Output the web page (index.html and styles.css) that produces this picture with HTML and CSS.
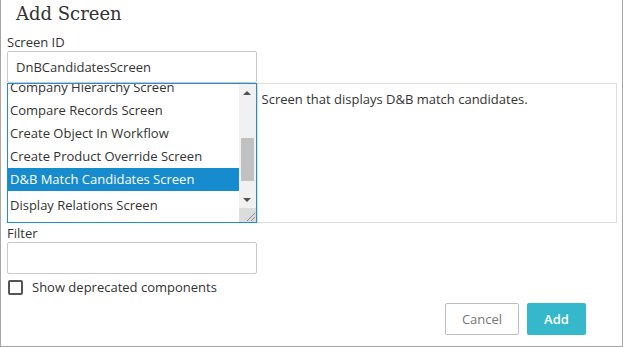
FILE: index.html
```html
<!DOCTYPE html>
<html lang="en">
<head>
  <meta charset="UTF-8">
  <meta name="viewport" content="width=device-width, initial-scale=1.0">
  <link rel="stylesheet" href="styles.css">
  <title>Add Screen</title>
</head>
<body>
  <div class="dialog">
    <h1 class="dialog-title">Add Screen</h1>

    <label class="field-label" for="screenId">Screen ID</label>
    <input type="text" id="screenId" class="text-input" value="DnBCandidatesScreen">

    <div class="picker-row">
      <div class="listbox">
        <div class="listbox-items">
          <div class="list-item first">Company Hierarchy Screen</div>
          <div class="list-item">Compare Records Screen</div>
          <div class="list-item">Create Object In Workflow</div>
          <div class="list-item">Create Product Override Screen</div>
          <div class="list-item selected">D&amp;B Match Candidates Screen</div>
          <div class="list-item after-selected">Display Relations Screen</div>
        </div>
        <div class="scrollbar">
          <div class="scroll-btn"><span class="arrow-up"></span></div>
          <div class="scroll-track"><div class="scroll-thumb"></div></div>
          <div class="scroll-btn"><span class="arrow-down"></span></div>
          <div class="resizer">
            <svg width="14" height="14" viewBox="0 0 14 14">
              <line x1="5" y1="13" x2="13" y2="5" stroke="#8a8a8a" stroke-width="1"/>
              <line x1="9" y1="13" x2="13" y2="9" stroke="#8a8a8a" stroke-width="1"/>
            </svg>
          </div>
        </div>
      </div>
      <div class="description">Screen that displays D&amp;B match candidates.</div>
    </div>

    <label class="field-label filter-label" for="filter">Filter</label>
    <input type="text" id="filter" class="text-input">

    <label class="check-row">
      <span class="checkbox"></span>
      <span>Show deprecated components</span>
    </label>

    <div class="actions">
      <button class="btn btn-cancel">Cancel</button>
      <button class="btn btn-add">Add</button>
    </div>
  </div>
</body>
</html>
```

FILE: styles.css
```css
body {
  margin: 0;
  padding: 0;
  background-color: #fff;
}

.dialog {
  width: 623px;
  height: 347px;
  box-sizing: border-box;
  border: 1px solid #a6a6a6;
  border-top: none;
  padding: 0 5px 0 6px;
  display: flex;
  flex-direction: column;
  font-family: 'Open Sans', sans-serif;
  font-size: 13px;
  color: #333;
}

.dialog-title {
  font-family: 'DejaVu Serif', serif;
  font-weight: normal;
  font-size: 18px;
  line-height: 24px;
  margin: 2px 0 0 9px;
  color: #333;
}

.field-label {
  display: block;
  line-height: 17px;
  margin-top: 8px;
}

.filter-label {
  margin-top: 2px;
}

.text-input {
  width: 250px;
  height: 32px;
  box-sizing: border-box;
  border: 1px solid #c9c9c9;
  border-radius: 2px;
  padding: 0 8px;
  font-family: 'Open Sans', sans-serif;
  font-size: 13px;
  color: #333;
  margin: 0;
  outline: none;
}

.picker-row {
  display: flex;
  height: 140px;
}

.listbox {
  width: 250px;
  box-sizing: border-box;
  border: 1px solid #1f8ed6;
  display: flex;
}

.listbox-items {
  flex: 1;
  overflow: hidden;
}

.list-item {
  height: 23px;
  line-height: 23px;
  padding-left: 2px;
  white-space: nowrap;
}

.list-item.first {
  margin-top: -8px;
}

.list-item.selected {
  background-color: #168bcd;
  color: #fff;
}

.list-item.after-selected {
  margin-top: 3px;
}

.scrollbar {
  width: 17px;
  background-color: #f1f1f1;
  display: flex;
  flex-direction: column;
}

.scroll-btn {
  height: 17px;
  display: flex;
  align-items: center;
  justify-content: center;
}

.arrow-up {
  width: 0;
  height: 0;
  border-left: 4px solid transparent;
  border-right: 4px solid transparent;
  border-bottom: 4px solid #505050;
}

.arrow-down {
  width: 0;
  height: 0;
  border-left: 4px solid transparent;
  border-right: 4px solid transparent;
  border-top: 4px solid #505050;
}

.scroll-track {
  flex: 1;
  padding: 37px 2px 0 2px;
}

.scroll-thumb {
  height: 43px;
  background-color: #c1c1c1;
}

.resizer {
  height: 14px;
  background-color: #dcdcdc;
  display: flex;
  justify-content: flex-end;
}

.description {
  width: 361px;
  box-sizing: border-box;
  border: 1px solid #dcdcdc;
  padding: 6px 4px;
  line-height: 18px;
}

.check-row {
  display: flex;
  align-items: center;
  gap: 9px;
  margin-top: 5px;
  margin-left: 1px;
  height: 16px;
}

.checkbox {
  width: 15px;
  height: 15px;
  box-sizing: border-box;
  border: 2px solid #555;
  border-radius: 2px;
}

.actions {
  display: flex;
  justify-content: flex-end;
  gap: 8px;
  margin-top: 8px;
  padding-right: 31px;
}

.btn {
  height: 32px;
  border-radius: 2px;
  font-family: 'Open Sans', sans-serif;
  font-size: 13px;
  cursor: pointer;
}

.btn-cancel {
  width: 74px;
  background-color: #fff;
  border: 1px solid #bdbdbd;
  color: #777;
}

.btn-add {
  width: 59px;
  background-color: #35b8cc;
  border: none;
  color: #fff;
  font-weight: 600;
}
```
